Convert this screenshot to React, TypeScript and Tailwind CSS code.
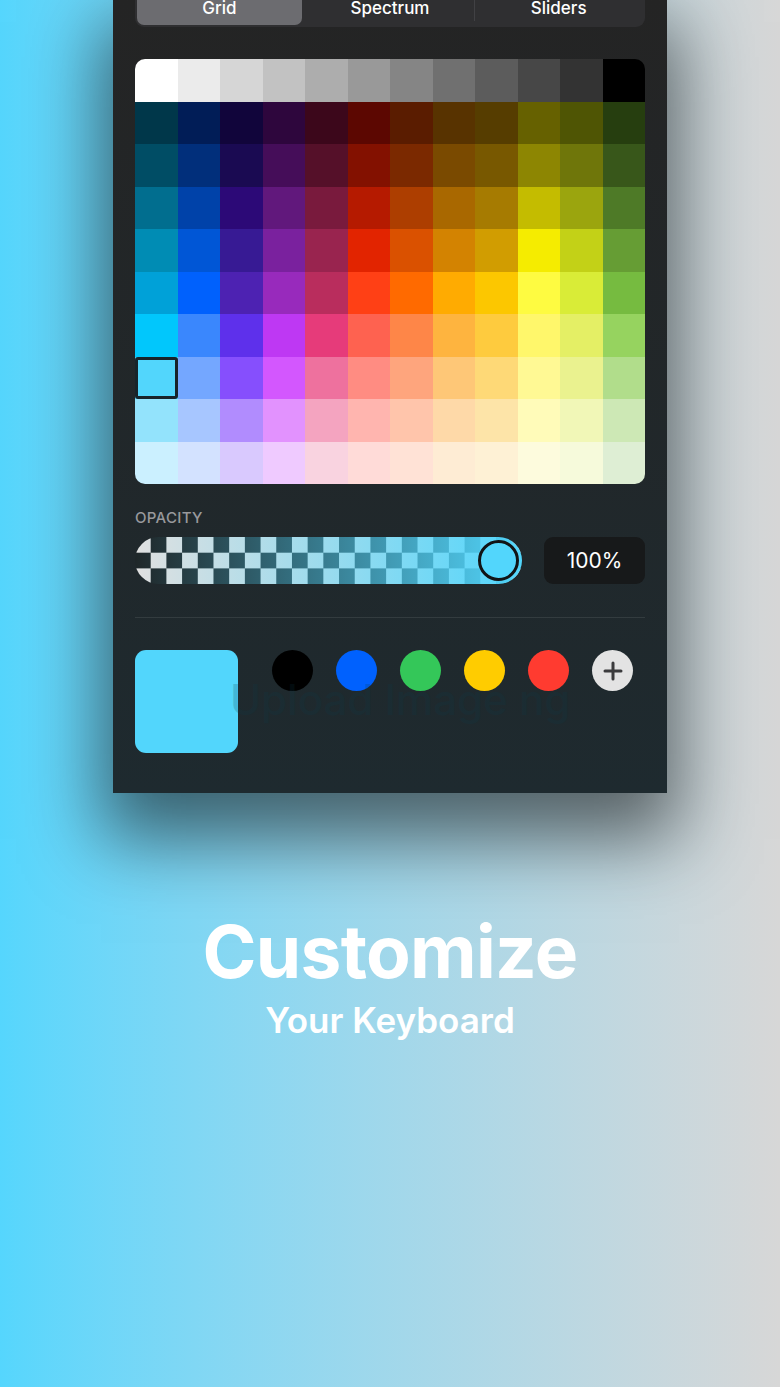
import React from "react";

const rows: string[][] = [
  ["#ffffff", "#ebebeb", "#d6d6d6", "#c2c2c2", "#adadad", "#999999", "#858585", "#707070", "#5c5c5c", "#474747", "#333333", "#000000"],
  ["#00374a", "#011d57", "#11053b", "#2e063d", "#3c071b", "#5c0701", "#5a1c00", "#583300", "#563d00", "#666100", "#4f5504", "#263e0f"],
  ["#004d65", "#012f7b", "#1a0a52", "#450d59", "#551029", "#831100", "#7b2900", "#7a4a00", "#785800", "#8d8602", "#6f760a", "#38571a"],
  ["#016e8f", "#0042a9", "#2c0977", "#61187c", "#791a3d", "#b51a00", "#ad3e00", "#a96800", "#a67b01", "#c4bc00", "#9ba50e", "#4e7a27"],
  ["#008cb4", "#0056d6", "#371a94", "#7a219e", "#99244f", "#e22400", "#da5100", "#d38301", "#d19d01", "#f5ec00", "#c3d117", "#669d34"],
  ["#00a1d8", "#0061fd", "#4d22b2", "#982abc", "#b92d5d", "#ff4015", "#ff6a00", "#ffab01", "#fcc700", "#fefb41", "#d9ec37", "#76bb40"],
  ["#01c7fc", "#3a87fd", "#5e30eb", "#be38f3", "#e63b7a", "#fe6250", "#fe8648", "#feb43f", "#fecb3e", "#fff76b", "#e4ef65", "#96d35f"],
  ["#52d6fc", "#74a7ff", "#864ffd", "#d357fe", "#ee719e", "#ff8c82", "#fea57d", "#fec777", "#fed977", "#fff994", "#eaf28f", "#b1dd8b"],
  ["#93e3fc", "#a7c6ff", "#b18cfe", "#e292fe", "#f4a4c0", "#ffb5af", "#ffc5ab", "#fed9a8", "#fde4a8", "#fffbb9", "#f1f7b7", "#cde8b5"],
  ["#cbf0ff", "#d3e2ff", "#d9c9fe", "#efcaff", "#f9d3e0", "#ffdbd8", "#ffe2d6", "#feecd4", "#fef1d5", "#fdfbdd", "#f6fadb", "#deeed4"],
];

const favorites = ["#000000", "#0061fe", "#34c759", "#ffcc00", "#ff3b30"];

export default function App() {
  return (
    <div className="relative w-[780px] h-[1387px] overflow-hidden bg-linear-to-r from-[#55d6fd] to-[#d7d7d7] font-['Inter','Noto_Sans',sans-serif]">
      <div className="mx-auto w-[554px] h-[793px] overflow-hidden bg-linear-to-b from-[#242424] to-[#1e2a2f] shadow-[0_34px_70px_12px_rgba(0,0,0,0.55)] px-[22px] flex flex-col">
        {/* Segmented control */}
        <div className="-mt-[10px] h-[37px] shrink-0 rounded-[9px] bg-[#2f2f31] p-[2px] grid grid-cols-3 text-[17px] font-medium text-white">
          <div className="rounded-[7px] bg-[#6c6c70] flex items-center justify-center mr-[4px]">Grid</div>
          <div className="flex items-center justify-center">Spectrum</div>
          <div className="flex items-center justify-center relative">
            <div className="absolute left-0 top-[8px] bottom-[4px] w-px bg-[#414144]" />
            Sliders
          </div>
        </div>

        {/* Color grid */}
        <div className="mt-[32px] shrink-0 grid grid-cols-12 rounded-[10px] overflow-hidden">
          {rows.map((row, ri) =>
            row.map((c, ci) => (
              <div key={`${ri}-${ci}`} className="h-[42.5px] relative" style={{ backgroundColor: c }}>
                {ri === 7 && ci === 0 && (
                  <div className="absolute inset-0 border-[3px] border-[#17242a] rounded-[3px]" />
                )}
              </div>
            ))
          )}
        </div>

        {/* Opacity */}
        <div className="mt-[25px] text-[15px] leading-[18px] font-medium tracking-[0.02em] text-[#98999c]">OPACITY</div>
        <div className="mt-[10px] flex items-center gap-[22px]">
          <div className="relative flex-1 h-[47px] rounded-full overflow-hidden bg-[image:repeating-conic-gradient(#1f2729_0_25%,#e0e0e0_0_50%)] bg-[length:31.4px_31.4px]">
            <div className="absolute inset-0 bg-linear-to-r from-[#52d6fc00] to-[#52d6fc]" />
            <div className="absolute right-[3px] top-[3px] w-[41px] h-[41px] rounded-full border-[3px] border-[#111416] bg-[#52d6fc]" />
          </div>
          <div className="w-[101px] h-[47px] rounded-[9px] bg-[#17191a] flex items-center justify-center text-[21px] text-white">100%</div>
        </div>

        <div className="mt-[33px] h-px bg-[#333c3f]" />

        {/* Bottom row */}
        <div className="relative mt-[32px] flex items-start">
          <div className="w-[103px] h-[103px] rounded-[11px] bg-[#52d6fc]" />
          <div className="ml-[34px] flex gap-[23px]">
            {favorites.map((c) => (
              <div key={c} className="w-[41px] h-[41px] rounded-full" style={{ backgroundColor: c }} />
            ))}
            <div className="w-[41px] h-[41px] rounded-full bg-[#e3e3e3] flex items-center justify-center">
              <svg width="22" height="22" viewBox="0 0 22 22">
                <path d="M11 3v16M3 11h16" stroke="#3b3b3d" strokeWidth="3" strokeLinecap="round" />
              </svg>
            </div>
          </div>
          <div className="absolute left-[95px] top-[18px] text-[42px] font-medium text-[#0d3a48] opacity-[0.2] whitespace-nowrap pointer-events-none">
            Upload Image ng
          </div>
        </div>
      </div>

      {/* Headline */}
      <div className="mt-[119px] flex flex-col items-center text-white">
        <div className="text-[73px] leading-[80px] font-bold tracking-[-0.01em]">Customize</div>
        <div className="mt-[7px] text-[35px] leading-[42px] font-semibold">Your Keyboard</div>
      </div>
    </div>
  );
}
